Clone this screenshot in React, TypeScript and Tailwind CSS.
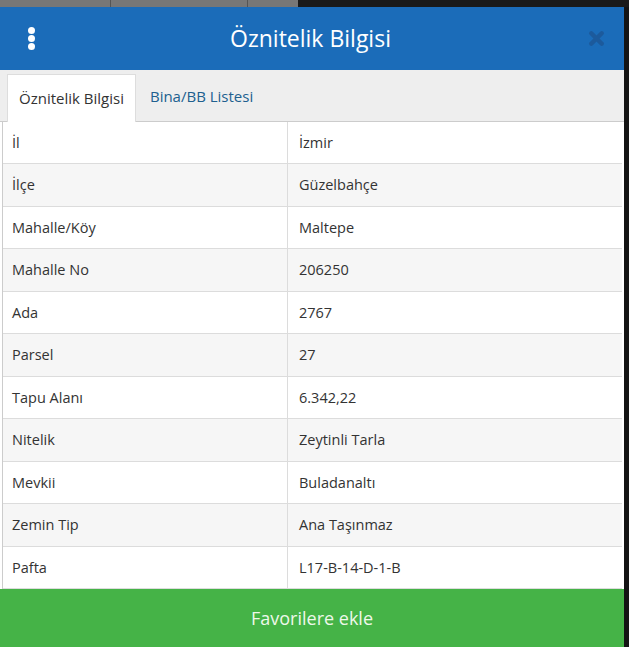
import { X } from "lucide-react";

const rows: [string, string][] = [
  ["İl", "İzmir"],
  ["İlçe", "Güzelbahçe"],
  ["Mahalle/Köy", "Maltepe"],
  ["Mahalle No", "206250"],
  ["Ada", "2767"],
  ["Parsel", "27"],
  ["Tapu Alanı", "6.342,22"],
  ["Nitelik", "Zeytinli Tarla"],
  ["Mevkii", "Buladanaltı"],
  ["Zemin Tip", "Ana Taşınmaz"],
  ["Pafta", "L17-B-14-D-1-B"],
];

export default function App() {
  return (
    <div className="h-[647px] w-[629px] overflow-hidden bg-[#141414] font-['Open_Sans',sans-serif]">
      {/* map toolbar peeking out behind the panel */}
      <div className="flex h-[7px]">
        <div className="w-[111px] border-r border-[#555] bg-[#777]" />
        <div className="w-[137px] border-r border-[#555] bg-[#777]" />
        <div className="w-[50px] bg-[#777]" />
        <div className="flex-1 bg-[#1a1a1a]" />
      </div>

      <div className="flex h-[640px] w-[624px] flex-col bg-white">
        <div className="flex h-[63px] items-center justify-between bg-[#1b6cb9] pl-[28px] pr-[26px] text-white">
          <div className="flex flex-col gap-[1px]">
            <span className="h-[7px] w-[7px] rounded-full bg-white" />
            <span className="h-[7px] w-[7px] rounded-full bg-white" />
            <span className="h-[7px] w-[7px] rounded-full bg-white" />
          </div>
          <h1 className="text-[23px] leading-none">Öznitelik Bilgisi</h1>
          <X className="mr-[-9px] h-[21px] w-[21px] text-[#1c5a9c]" strokeWidth={5} />
        </div>

        <div className="flex h-[52px] items-end border-b border-[#ccc] bg-[#eeeeee] pl-[7px]">
          <div className="mb-[-1px] flex h-[48px] items-center border border-b-0 border-[#ddd] bg-white px-[11px] text-[15px] text-[#333]">
            Öznitelik Bilgisi
          </div>
          <div className="flex h-[48px] items-center px-[14px] text-[15px] text-[#20608f]">Bina/BB Listesi</div>
        </div>

        <div className="mx-[2px] flex-1 border-l border-[#ccc]">
          {rows.map(([k, v], i) => (
            <div
              key={k}
              className={`flex h-[42.5px] items-center border-b border-[#dcdcdc] text-[14.5px] text-[#333] ${
                i % 2 === 1 ? "bg-[#f6f6f6]" : "bg-white"
              }`}
            >
              <div className="flex h-full w-[285px] items-center border-r border-[#dcdcdc] pl-[9px]">{k}</div>
              <div className="pl-[11px]">{v}</div>
            </div>
          ))}
        </div>

        <button className="h-[58px] w-full bg-[#45b347] text-[18px] text-[#eef8ea]">Favorilere ekle</button>
      </div>
    </div>
  );
}
